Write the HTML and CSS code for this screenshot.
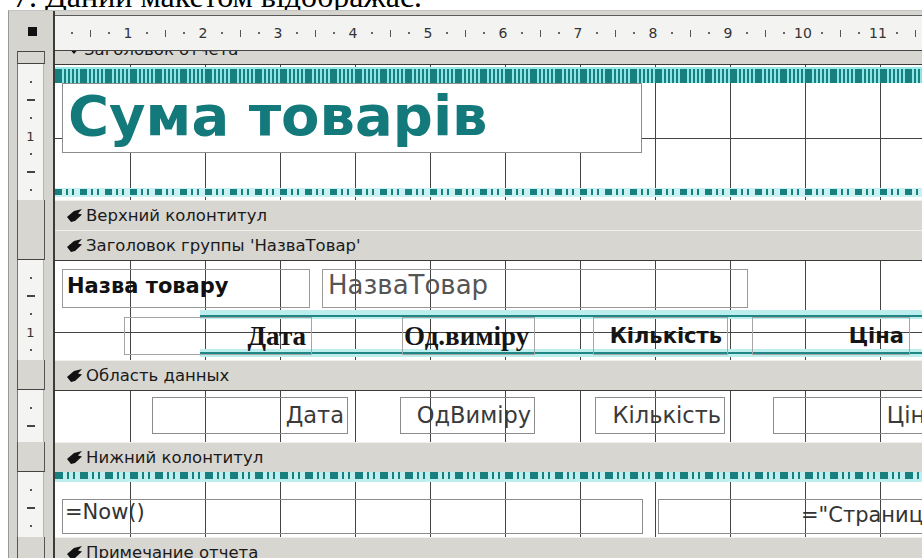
FILE: index.html
```html
<!DOCTYPE html>
<html lang="uk">
<head>
<meta charset="utf-8">
<title>Сума товарів — конструктор звіту</title>
<link rel="stylesheet" href="styles.css">
</head>
<body>
<div class="caption"><span>7. Даний макетом відображає:</span></div>

<div class="designer">

  <!-- ruler row -->
  <div class="row row-ruler">
    <div class="side"><span class="select-all"></span></div>
    <div class="pane">
      <div class="hruler">
        <span class="q dot"></span><span class="q tick"></span><span class="q dot"></span><span class="q num">1</span>
        <span class="q dot"></span><span class="q tick"></span><span class="q dot"></span><span class="q num">2</span>
        <span class="q dot"></span><span class="q tick"></span><span class="q dot"></span><span class="q num">3</span>
        <span class="q dot"></span><span class="q tick"></span><span class="q dot"></span><span class="q num">4</span>
        <span class="q dot"></span><span class="q tick"></span><span class="q dot"></span><span class="q num">5</span>
        <span class="q dot"></span><span class="q tick"></span><span class="q dot"></span><span class="q num">6</span>
        <span class="q dot"></span><span class="q tick"></span><span class="q dot"></span><span class="q num">7</span>
        <span class="q dot"></span><span class="q tick"></span><span class="q dot"></span><span class="q num">8</span>
        <span class="q dot"></span><span class="q tick"></span><span class="q dot"></span><span class="q num">9</span>
        <span class="q dot"></span><span class="q tick"></span><span class="q dot"></span><span class="q num">10</span>
        <span class="q dot"></span><span class="q tick"></span><span class="q dot"></span><span class="q num">11</span>
        <span class="q dot"></span><span class="q tick"></span><span class="q dot"></span><span class="q num">12</span>
      </div>
    </div>
  </div>

  <!-- report header bar (scrolled partly out of view) -->
  <div class="row row-bar-cut">
    <div class="side"><div class="selector full"></div></div>
    <div class="pane">
      <div class="bar bar-cut">
        <svg class="ico" viewBox="0 0 14 12" width="14" height="12"><polygon points="1,3 13,3 7,10" fill="#111"/></svg>
        Заголовок отчета
      </div>
    </div>
  </div>

  <!-- report header -->
  <div class="row row-rh">
    <div class="side">
      <div class="vruler">
        <span class="vm dot"></span><span class="vm dash"></span><span class="vm dot"></span><span class="vm num">1</span>
        <span class="vm dot"></span><span class="vm dash"></span><span class="vm dot"></span>
      </div>
    </div>
    <div class="pane section sec-rh">
      <div class="band band-dense"></div>
      <div class="title-box">Сума товарів</div>
      <div class="band band-dash band-rh"></div>
    </div>
  </div>

  <!-- page header bar -->
  <div class="row row-bar">
    <div class="side"><div class="selector open"></div></div>
    <div class="pane">
      <div class="bar">
        <svg class="ico" viewBox="0 0 16 13" width="16" height="13"><polygon points="0,8 7,2 15,0 11,4.5 15,5.5 8,12 4,13" fill="#111"/></svg>
        Верхний колонтитул
      </div>
    </div>
  </div>

  <!-- group header bar -->
  <div class="row row-bar">
    <div class="side"><div class="selector"></div></div>
    <div class="pane">
      <div class="bar">
        <svg class="ico" viewBox="0 0 16 13" width="16" height="13"><polygon points="0,8 7,2 15,0 11,4.5 15,5.5 8,12 4,13" fill="#111"/></svg>
        Заголовок группы 'НазваТовар'
      </div>
    </div>
  </div>

  <!-- group header -->
  <div class="row row-gh">
    <div class="side">
      <div class="vruler">
        <span class="vm dot"></span><span class="vm dash"></span><span class="vm dot"></span><span class="vm num">1</span>
        <span class="vm dot"></span>
      </div>
    </div>
    <div class="pane section sec-gh">
      <div class="gh-top">
        <div class="ctl lbl-name">Назва товару</div>
        <div class="ctl fld-name">НазваТовар</div>
      </div>
      <div class="gh-cols">
        <div class="ctl col col-date">Дата</div>
        <div class="ctl col col-unit">Од.виміру</div>
        <div class="ctl col col-qty">Кількість</div>
        <div class="ctl col col-price">Ціна</div>
      </div>
    </div>
  </div>

  <!-- detail bar -->
  <div class="row row-bar">
    <div class="side"><div class="selector"></div></div>
    <div class="pane">
      <div class="bar">
        <svg class="ico" viewBox="0 0 16 13" width="16" height="13"><polygon points="0,8 7,2 15,0 11,4.5 15,5.5 8,12 4,13" fill="#111"/></svg>
        Область данных
      </div>
    </div>
  </div>

  <!-- detail -->
  <div class="row row-detail">
    <div class="side">
      <div class="vruler">
        <span class="vm dot"></span><span class="vm dash"></span>
      </div>
    </div>
    <div class="pane section sec-detail">
      <div class="ctl fld fld-date">Дата</div>
      <div class="ctl fld fld-unit">ОдВиміру</div>
      <div class="ctl fld fld-qty">Кількість</div>
      <div class="ctl fld fld-price">Ціна</div>
    </div>
  </div>

  <!-- page footer bar -->
  <div class="row row-bar">
    <div class="side"><div class="selector"></div></div>
    <div class="pane">
      <div class="bar">
        <svg class="ico" viewBox="0 0 16 13" width="16" height="13"><polygon points="0,8 7,2 15,0 11,4.5 15,5.5 8,12 4,13" fill="#111"/></svg>
        Нижний колонтитул
      </div>
    </div>
  </div>

  <!-- page footer -->
  <div class="row row-pf">
    <div class="side">
      <div class="vruler">
        <span class="vm dot"></span><span class="vm dash"></span><span class="vm dot"></span>
      </div>
    </div>
    <div class="pane section sec-pf">
      <div class="band band-dash band-pf"></div>
      <div class="pf-row">
        <div class="ctl fld-now">=Now()</div>
        <div class="ctl fld-page">="Страница " &amp; [Page] &amp; " из " &amp; [Pages]</div>
      </div>
    </div>
  </div>

  <!-- report footer bar -->
  <div class="row row-bar">
    <div class="side"><div class="selector"></div></div>
    <div class="pane">
      <div class="bar">
        <svg class="ico" viewBox="0 0 16 13" width="16" height="13"><polygon points="0,8 7,2 15,0 11,4.5 15,5.5 8,12 4,13" fill="#111"/></svg>
        Примечание отчета
      </div>
    </div>
  </div>

</div>
</body>
</html>
```

FILE: styles.css
```css
html, body {
  margin: 0;
  height: 100%;
  overflow: hidden;
  background: #fff;
}

body {
  font-family: "DejaVu Sans", sans-serif;
  color: #1e1e1e;
}

/* caption line above the designer window, scrolled partly off the top */
.caption {
  height: 10px;
  overflow: hidden;
  padding-left: 13px;
  font-family: "Liberation Serif", serif;
  font-size: 32px;
  line-height: 32px;
  color: #000;
}
.caption span {
  display: block;
  margin-top: -20px;
  white-space: nowrap;
}

/* designer window */
.designer {
  margin-left: 8px;
  height: 548px;
  overflow: hidden;
  background: #d6d4cf;
  border-left: 1px solid #9a9a9a;
  border-top: 1px solid #c4c4c4;
}

.row {
  display: grid;
  grid-template-columns: 44px 1fr;
  overflow: hidden;
}

.side {
  background: #d6d4cf;
  overflow: hidden;
}

.pane {
  border-left: 2px solid #3b3b3b;
  overflow: hidden;
  min-width: 0;
}

/* top ruler */
.row-ruler { height: 40px; }

.select-all {
  display: block;
  width: 9px;
  height: 9px;
  margin: 16px 0 0 19px;
  background: #111;
}

.hruler {
  margin-top: 4px;
  height: 34px;
  border-top: 1px solid #5a5a5a;
  border-bottom: 1px solid #444;
  background: #f3f3f2;
  display: flex;
  align-items: center;
  padding-left: 7.4px;
  white-space: nowrap;
}

.q {
  flex: none;
  width: 18.75px;
  display: flex;
  justify-content: center;
  align-items: center;
  font-size: 14px;
  color: #333;
}
.q.dot::before {
  content: "";
  width: 2px;
  height: 2px;
  background: #666;
}
.q.tick::before {
  content: "";
  width: 1px;
  height: 7px;
  background: #555;
}

/* left vertical ruler */
.vruler {
  margin-left: 8px;
  width: 27px;
  height: 100%;
  box-sizing: border-box;
  background: #f4f4f2;
  border-left: 1px solid #777;
  border-right: 1px solid #b5b5b5;
  padding-top: 9px;
  display: flex;
  flex-direction: column;
}

.vm {
  flex: none;
  height: 18px;
  display: flex;
  justify-content: center;
  align-items: center;
  font-size: 13px;
  color: #333;
}
.vm.dot::before {
  content: "";
  width: 2px;
  height: 2px;
  background: #555;
}
.vm.dash::before {
  content: "";
  width: 8px;
  height: 2px;
  background: #444;
}

/* section selector boxes beside the bars */
.selector {
  margin-left: 8px;
  width: 28px;
  height: 100%;
  box-sizing: border-box;
  background: #d8d6d1;
  border-left: 1px solid #555;
  border-right: 1px solid #555;
  border-bottom: 1px solid #444;
}
.selector.full { border-top: 1px solid #444; }
.selector.open { border-bottom: none; }

/* section bars */
.row-bar { height: 30px; }
.row-bar-cut { height: 13px; }

.bar {
  height: 29px;
  border-top: 1px solid #f1f0ec;
  background: #d8d6d1;
  display: flex;
  align-items: center;
  gap: 3px;
  padding-left: 12px;
  font-size: 16.5px;
  color: #1a1a1a;
  white-space: nowrap;
}
.bar-cut { margin-top: -17px; }

.ico { flex: none; }

/* section areas with the design grid */
.section {
  --h: -10px;
  background-color: #fff;
  background-image:
    linear-gradient(#444, #444),
    repeating-linear-gradient(90deg, transparent 0 74px, #444 74px 75px);
  background-size: 100% 1px, auto;
  background-repeat: no-repeat, repeat;
  background-position: 0 var(--h), 1px 0;
  border-top: 1px solid #3a3a3a;
}

.row-rh { height: 136px; }
.row-gh { height: 100px; }
.row-detail { height: 52px; }
.row-pf { height: 65px; }

/* teal dotted strips */
.band { width: 100%; }

.band-dense {
  margin-top: 2px;
  height: 16px;
  background:
    linear-gradient(#9ae8e8, #9ae8e8) 0 0 / 100% 2px no-repeat,
    repeating-linear-gradient(90deg,
      #17807f 0 7px, #8de5e5 7px 9px,
      #17807f 9px 11px, #8de5e5 11px 13px,
      #17807f 13px 15px, #8de5e5 15px 17px,
      #17807f 17px 19px, #8de5e5 19px 21px,
      #17807f 21px 23px, #8de5e5 23px 25px);
}

.band-dash {
  background:
    repeating-linear-gradient(90deg,
      #17807f 0 7px, transparent 7px 11px,
      #17807f 11px 13px, transparent 13px 17px,
      #17807f 17px 19px, transparent 19px 25px) 0 1px / 100% 6px no-repeat,
    #c9f1f1;
}
.band-rh {
  height: 9px;
  margin-top: 35px;
}
.band-pf {
  height: 10px;
  background:
    repeating-linear-gradient(90deg,
      #17807f 0 8px, transparent 8px 12px,
      #17807f 12px 14px, transparent 14px 18px,
      #17807f 18px 20px, transparent 20px 25px) 0 0 / 100% 7px no-repeat,
    #bfeeee;
}

/* report header */
.sec-rh { --h: 73px; }

.title-box {
  box-sizing: border-box;
  margin-left: 7px;
  width: 580px;
  height: 70px;
  border: 1px solid #8c8c8c;
  background: #fff;
  padding-left: 5px;
  font-size: 56px;
  font-weight: bold;
  line-height: 64px;
  color: #13797b;
  white-space: nowrap;
}

/* controls */
.ctl {
  box-sizing: border-box;
  flex: none;
  border: 1px solid #999;
  white-space: nowrap;
  overflow: hidden;
}

/* group header */
.sec-gh { --h: 71px; }

.gh-top {
  display: flex;
  margin: 8px 0 0 7px;
  height: 39px;
}
.lbl-name {
  width: 248px;
  padding: 2px 0 0 4px;
  font-size: 21px;
  font-weight: bold;
  line-height: 28px;
  color: #111;
}
.fld-name {
  margin-left: 12px;
  width: 426px;
  padding-left: 5px;
  font-size: 26px;
  line-height: 30px;
  color: #555;
}

.gh-cols {
  display: flex;
  align-items: flex-start;
  margin: 2px 0 0 69px;
  height: 47px;
  padding-top: 7px;
  box-sizing: border-box;
  background:
    linear-gradient(#1f8585, #1f8585) 76px 5px / 100% 2px no-repeat,
    linear-gradient(#bdeeee, #bdeeee) 76px 0 / 100% 9px no-repeat,
    linear-gradient(#1f8585, #1f8585) 76px 42px / 100% 2px no-repeat,
    linear-gradient(#bdeeee, #bdeeee) 76px 39px / 100% 8px no-repeat;
}
.col {
  height: 38px;
  line-height: 36px;
  font-weight: bold;
  color: #151515;
  border-color: #a6a6a6;
}
.col-date {
  width: 188px;
  text-align: right;
  padding-right: 5px;
  font-family: "Liberation Serif", serif;
  font-size: 27px;
}
.col-unit {
  margin-left: 90px;
  width: 133px;
  padding-left: 1px;
  font-family: "Liberation Serif", serif;
  font-size: 27px;
}
.col-qty {
  margin-left: 58px;
  width: 135px;
  text-align: right;
  padding-right: 5px;
  font-size: 21px;
}
.col-price {
  margin-left: 24px;
  width: 158px;
  text-align: right;
  padding-right: 5px;
  font-size: 21px;
}

/* detail */
.sec-detail {
  display: flex;
  align-items: flex-start;
  padding: 6px 0 0 97px;
  box-sizing: border-box;
}
.fld {
  height: 37px;
  line-height: 35px;
  text-align: right;
  padding-right: 3px;
  font-size: 22.5px;
  color: #3a3a3a;
  border-color: #8c8c8c;
}
.fld-date { width: 196px; }
.fld-unit { margin-left: 52px; width: 135px; }
.fld-qty { margin-left: 60px; width: 130px; }
.fld-price { margin-left: 48px; width: 170px; }

/* page footer */
.sec-pf { border-top: none; }

.pf-row {
  display: flex;
  margin: 17px 0 0 7px;
}
.fld-now {
  width: 581px;
  height: 35px;
  padding-left: 2px;
  font-size: 21px;
  line-height: 25px;
  color: #333;
  border-color: #8c8c8c;
}
.fld-page {
  margin-left: 15px;
  width: 480px;
  height: 35px;
  padding-left: 142px;
  font-size: 21px;
  line-height: 30px;
  color: #333;
  border-color: #8c8c8c;
}
```
